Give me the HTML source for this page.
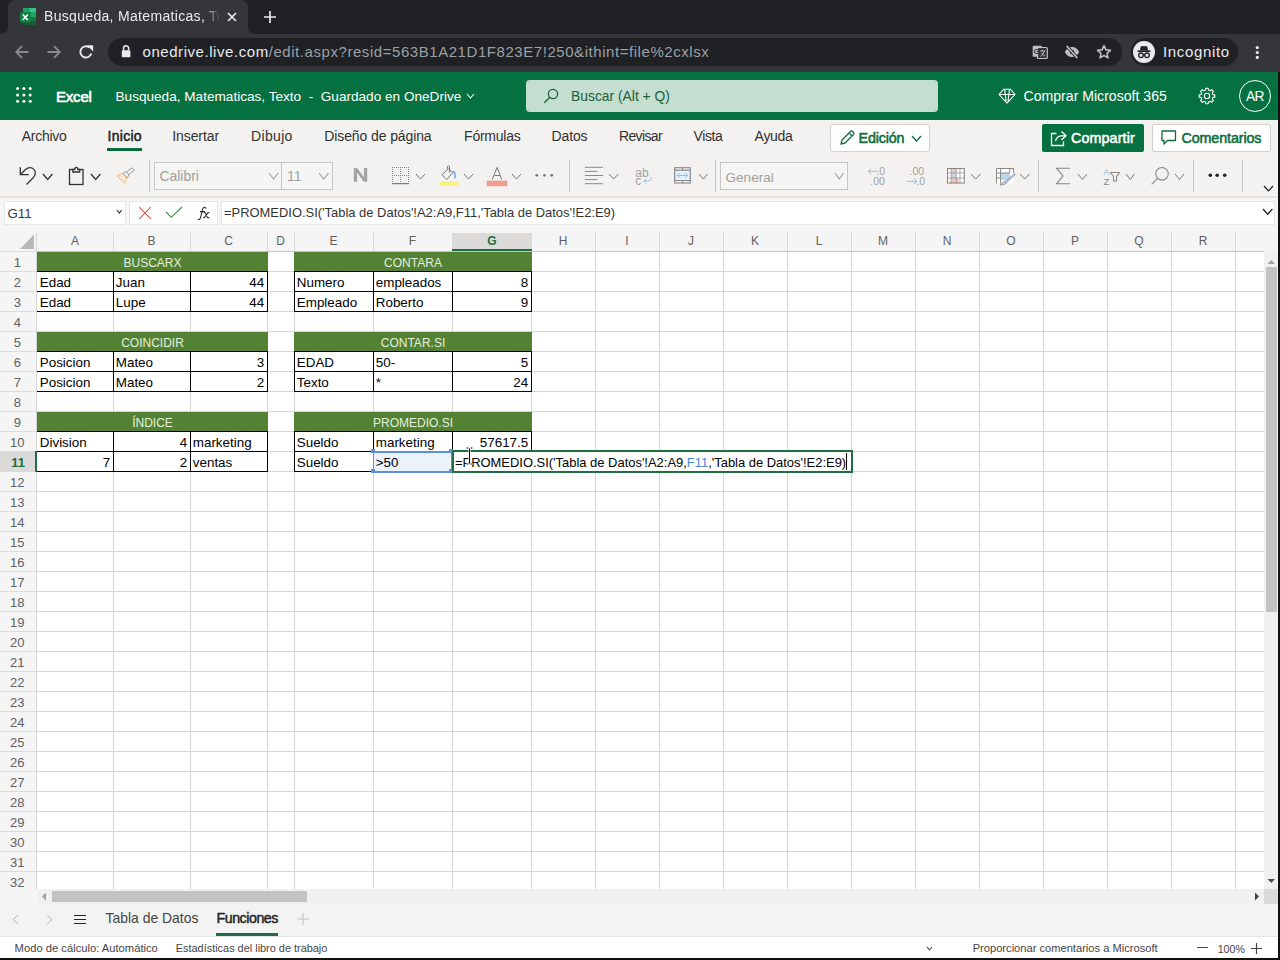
<!DOCTYPE html><html><head><meta charset="utf-8"><style>
*{box-sizing:border-box}
html,body{margin:0;padding:0;width:1280px;height:960px;overflow:hidden;font-family:"Liberation Sans", sans-serif;background:#fff}
.a{position:absolute}
.t{position:absolute;white-space:nowrap}
</style></head><body>
<div class="a" style="left:0px;top:0px;width:1280px;height:34px;background:#202124;"></div>
<svg class="a" style="left:0;top:0" width="260" height="34"><path d="M0 34Q8 34 8 26V8Q8 0 16 0H240Q248 0 248 8V26Q248 34 256 34Z" fill="#35363a"/></svg>
<svg class="a" style="left:20px;top:8px" width="16" height="18" viewBox="0 0 16 18"><rect x="3" y="0" width="13" height="17" fill="#185c37"/><rect x="3" y="0" width="13" height="4.5" fill="#21a366"/><rect x="9.5" y="0" width="6.5" height="4.5" fill="#33c481"/><rect x="9.5" y="4.5" width="6.5" height="4.5" fill="#21a366"/><rect x="9.5" y="9" width="6.5" height="4" fill="#107c41"/><rect x="3" y="4.5" width="6.5" height="8.5" fill="#107c41"/><rect x="0" y="4" width="10.5" height="10.5" fill="#107c41"/><path d="M2.8 6.5L7.8 12M7.8 6.5L2.8 12" stroke="#fff" stroke-width="1.6"/></svg>
<div class="t" style="left:44px;top:9px;font-size:14px;line-height:14px;letter-spacing:0.32px;color:#e8eaed;width:176px;overflow:hidden;-webkit-mask-image:linear-gradient(90deg,#000 160px,rgba(0,0,0,0.25) 172px,transparent 176px)">Busqueda, Matematicas, Texto</div>
<svg class="a" style="left:226px;top:11px" width="12" height="12" viewBox="0 0 12 12"><path d="M2 2L10 10M10 2L2 10" stroke="#e8eaed" stroke-width="1.7"/></svg>
<svg class="a" style="left:263px;top:10px" width="14" height="14" viewBox="0 0 14 14"><path d="M7 1V13M1 7H13" stroke="#e8eaed" stroke-width="1.7"/></svg>
<div class="a" style="left:0px;top:34px;width:1280px;height:38px;background:#35363a;"></div>
<svg class="a" style="left:14px;top:44px" width="16" height="16" viewBox="0 0 16 16"><path d="M14.5 8H2.5M8 2.2L2.2 8L8 13.8" stroke="#8a8b8d" stroke-width="1.8" fill="none"/></svg>
<svg class="a" style="left:46px;top:44px" width="16" height="16" viewBox="0 0 16 16"><path d="M1.5 8H13.5M8 2.2L13.8 8L8 13.8" stroke="#8a8b8d" stroke-width="1.8" fill="none"/></svg>
<svg class="a" style="left:78px;top:44px" width="16" height="16" viewBox="0 0 16 16"><path d="M13.3 9.5A5.6 5.6 0 1 1 11.5 3.6" stroke="#e8eaed" stroke-width="1.9" fill="none"/><path d="M9 1.3H15.2V7.5Z" fill="#e8eaed"/></svg>
<div class="a" style="left:108px;top:38px;width:1014px;height:28px;background:#202124;border-radius:14px"></div>
<svg class="a" style="left:120px;top:44px" width="14" height="16" viewBox="0 0 14 16"><rect x="1.8" y="6.3" width="8.6" height="7" rx="0.8" fill="#e8eaed"/><path d="M3.6 6.3V4.3A2.5 2.5 0 0 1 8.6 4.3V6.3" stroke="#e8eaed" stroke-width="1.6" fill="none"/></svg>
<div class="t" style="left:142.5px;top:44.30px;font-size:15px;line-height:15px;color:#e8eaed;font-weight:normal;letter-spacing:0.557px;">onedrive.live.com<span style="color:#9aa0a6">/edit.aspx?resid=563B1A21D1F823E7!250&amp;ithint=file%2cxlsx</span></div>
<svg class="a" style="left:1032px;top:45px" width="16" height="14" viewBox="0 0 16 14"><rect x="0.7" y="0.7" width="9" height="11" rx="1" fill="#bdc1c6"/><rect x="5.5" y="2.5" width="9.8" height="11" rx="1" fill="#35363a" stroke="#bdc1c6" stroke-width="1.2"/><text x="1.5" y="9" font-size="8" font-weight="bold" fill="#35363a" font-family="Liberation Sans">G</text><path d="M8 6H13M10.5 5V6M12.5 6Q11 10 8.5 11.5M9.5 8Q11 10.5 13 11" stroke="#bdc1c6" stroke-width="0.9" fill="none"/></svg>
<svg class="a" style="left:1064px;top:45px" width="16" height="14" viewBox="0 0 16 14"><path d="M0.8 7C3 3 5.5 2 8 2C10.5 2 13 3 15.2 7C13 11 10.5 12 8 12C5.5 12 3 11 0.8 7Z" fill="#bdc1c6"/><circle cx="8" cy="7" r="2.3" fill="#202124"/><path d="M2.5 0.8L13.5 13.2" stroke="#202124" stroke-width="3.2"/><path d="M2.5 0.8L13.5 13.2" stroke="#bdc1c6" stroke-width="1.6"/></svg>
<svg class="a" style="left:1096px;top:44px" width="16" height="16" viewBox="0 0 16 16"><path d="M8 1.6L9.9 5.9L14.5 6.3L11 9.4L12.1 13.9L8 11.5L3.9 13.9L5 9.4L1.5 6.3L6.1 5.9Z" fill="none" stroke="#bdc1c6" stroke-width="1.6" stroke-linejoin="round"/></svg>
<div class="a" style="left:1131px;top:38px;width:107px;height:28px;background:#202124;border-radius:14px"></div>
<div class="a" style="left:1133px;top:41px;width:22px;height:22px;background:#e8eaed;border-radius:11px"></div>
<svg class="a" style="left:1133px;top:41px" width="22" height="22" viewBox="0 0 22 22"><path d="M4.5 10.2H17.5" stroke="#202124" stroke-width="1.6"/><path d="M6.8 9.6L7.9 5.2H14.1L15.2 9.6Z" fill="#202124"/><circle cx="8" cy="14.3" r="2.3" fill="none" stroke="#202124" stroke-width="1.4"/><circle cx="14" cy="14.3" r="2.3" fill="none" stroke="#202124" stroke-width="1.4"/><path d="M10.2 14H11.8" stroke="#202124" stroke-width="1.2"/></svg>
<div class="t" style="left:1163px;top:44.30px;font-size:15px;line-height:15px;color:#e8eaed;font-weight:normal;letter-spacing:0.658px;">Incognito</div>
<svg class="a" style="left:1254px;top:44px" width="7" height="16" viewBox="0 0 7 16"><circle cx="3.3" cy="3.6" r="1.6" fill="#e8eaed"/><circle cx="3.3" cy="8.5" r="1.6" fill="#e8eaed"/><circle cx="3.3" cy="13.4" r="1.6" fill="#e8eaed"/></svg>
<div class="a" style="left:0px;top:72px;width:1280px;height:48px;background:#067140;"></div>
<svg class="a" style="left:16px;top:87px" width="16" height="16" viewBox="0 0 16 16"><circle cx="1.6" cy="1.6" r="1.5" fill="#fff"/><circle cx="1.6" cy="7.9" r="1.5" fill="#fff"/><circle cx="1.6" cy="14.2" r="1.5" fill="#fff"/><circle cx="7.9" cy="1.6" r="1.5" fill="#fff"/><circle cx="7.9" cy="7.9" r="1.5" fill="#fff"/><circle cx="7.9" cy="14.2" r="1.5" fill="#fff"/><circle cx="14.2" cy="1.6" r="1.5" fill="#fff"/><circle cx="14.2" cy="7.9" r="1.5" fill="#fff"/><circle cx="14.2" cy="14.2" r="1.5" fill="#fff"/></svg>
<div class="t" style="left:56px;top:89.10px;font-size:15px;line-height:15px;color:#fff;font-weight:normal;letter-spacing:-0.2px;-webkit-text-stroke:0.6px #fff;">Excel</div>
<div class="t" style="left:115.5px;top:89.89px;font-size:13.6px;line-height:13.6px;color:#fff;font-weight:normal;">Busqueda, Matematicas, Texto&nbsp; -&nbsp; Guardado en OneDrive</div>
<svg class="a" style="left:466px;top:93px" width="10" height="7" viewBox="0 0 10 7"><path d="M1 1L4.5 5L8 1" fill="none" stroke="#fff" stroke-width="1.1"/></svg>
<div class="a" style="left:526px;top:80px;width:412px;height:32px;background:#c4decf;border-radius:4px"></div>
<svg class="a" style="left:543px;top:88px" width="17" height="16" viewBox="0 0 17 16"><circle cx="10" cy="6" r="4.6" fill="none" stroke="#1b5e3b" stroke-width="1.3"/><path d="M6.8 9.3L1.3 14.8" stroke="#1b5e3b" stroke-width="1.3"/></svg>
<div class="t" style="left:571px;top:90.07px;font-size:13.86px;line-height:13.86px;color:#1b5e3b;font-weight:normal;">Buscar (Alt + Q)</div>
<svg class="a" style="left:998px;top:88px" width="18" height="17" viewBox="0 0 18 17"><path d="M5.8 1.2H12.3L17 6.5L9 15.2L1 6.5Z M1 6.5H17 M6.6 1.4L8.1 13.3 M11.5 1.4L10 13.3" fill="none" stroke="#fff" stroke-width="1.1" stroke-linejoin="round"/></svg>
<div class="t" style="left:1023.5px;top:89.16px;font-size:14.1px;line-height:14.1px;color:#fff;font-weight:normal;">Comprar Microsoft 365</div>
<svg class="a" style="left:1198px;top:87px" width="18" height="18" viewBox="0 0 18 18"><circle cx="9" cy="9" r="2.7" fill="none" stroke="#fff" stroke-width="1.1"/><path d="M16.80 7.76L16.80 10.24L14.93 10.42L14.20 12.19L15.39 13.64L13.64 15.39L12.19 14.20L10.42 14.93L10.24 16.80L7.76 16.80L7.58 14.93L5.81 14.20L4.36 15.39L2.61 13.64L3.80 12.19L3.07 10.42L1.20 10.24L1.20 7.76L3.07 7.58L3.80 5.81L2.61 4.36L4.36 2.61L5.81 3.80L7.58 3.07L7.76 1.20L10.24 1.20L10.42 3.07L12.19 3.80L13.64 2.61L15.39 4.36L14.20 5.81L14.93 7.58Z" fill="none" stroke="#fff" stroke-width="1.1" stroke-linejoin="round"/></svg>
<div class="a" style="left:1239px;top:80px;width:32px;height:32px;border:1.2px solid #fff;border-radius:16px"></div>
<div class="t" style="left:1239px;width:32px;text-align:center;top:90.32px;font-size:13.8px;line-height:13.8px;color:#fff;font-weight:normal;letter-spacing:-0.6px;">AR</div>
<div class="a" style="left:0px;top:120px;width:1280px;height:76px;background:#f3f2f1;"></div>
<div class="t" style="left:21.7px;top:129.45px;font-size:14px;line-height:14px;color:#323130;font-weight:normal;letter-spacing:-0.25px;">Archivo</div>
<div class="t" style="left:107.5px;top:129.45px;font-size:14px;line-height:14px;color:#201f1e;font-weight:normal;letter-spacing:0.28px;-webkit-text-stroke:0.5px #201f1e;">Inicio</div>
<div class="t" style="left:172.3px;top:129.45px;font-size:14px;line-height:14px;color:#323130;font-weight:normal;letter-spacing:-0.1px;">Insertar</div>
<div class="t" style="left:251.0px;top:129.45px;font-size:14px;line-height:14px;color:#323130;font-weight:normal;letter-spacing:0.34px;">Dibujo</div>
<div class="t" style="left:324.29999999999995px;top:129.45px;font-size:14px;line-height:14px;color:#323130;font-weight:normal;letter-spacing:-0.11px;">Diseño de página</div>
<div class="t" style="left:464.09999999999997px;top:129.45px;font-size:14px;line-height:14px;color:#323130;font-weight:normal;letter-spacing:-0.25px;">Fórmulas</div>
<div class="t" style="left:551.6px;top:129.45px;font-size:14px;line-height:14px;color:#323130;font-weight:normal;letter-spacing:-0.14px;">Datos</div>
<div class="t" style="left:619.0px;top:129.45px;font-size:14px;line-height:14px;color:#323130;font-weight:normal;letter-spacing:-0.65px;">Revisar</div>
<div class="t" style="left:693.4px;top:129.45px;font-size:14px;line-height:14px;color:#323130;font-weight:normal;letter-spacing:-0.35px;">Vista</div>
<div class="t" style="left:754.6px;top:129.45px;font-size:14px;line-height:14px;color:#323130;font-weight:normal;letter-spacing:-0.29px;">Ayuda</div>
<div class="a" style="left:107px;top:148px;width:35px;height:3px;background:#0b6a3a;"></div>
<div class="a" style="left:830px;top:124px;width:100px;height:28px;background:#fff;border:1px solid #d2d0ce;border-radius:2px"></div>
<svg class="a" style="left:839px;top:129px" width="17" height="17" viewBox="0 0 17 17"><path d="M2 15L3 11L11.5 2.5Q12.5 1.5 13.5 2.5L14.5 3.5Q15.5 4.5 14.5 5.5L6 14Z M10 4L13 7" fill="none" stroke="#0e6e3a" stroke-width="1.3" stroke-linejoin="round"/></svg>
<div class="t" style="left:858.5px;top:131.10px;font-size:14.3px;line-height:14.3px;color:#0e6e3a;font-weight:normal;letter-spacing:-0.16px;-webkit-text-stroke:0.55px #0e6e3a;">Edición</div>
<svg class="a" style="left:911px;top:135px" width="12" height="8" viewBox="0 0 12 8"><path d="M1 1L5.5 6L10 1" fill="none" stroke="#0e6e3a" stroke-width="1.3"/></svg>
<div class="a" style="left:1042px;top:124px;width:102px;height:28px;background:#067140;border-radius:2px"></div>
<svg class="a" style="left:1050px;top:130px" width="18" height="18" viewBox="0 0 18 18"><path d="M11.5 1.5L16 5.8L11.5 10 M16 5.8H12Q6.5 5.8 5.5 11" fill="none" stroke="#fff" stroke-width="1.3" stroke-linejoin="round"/><path d="M6.5 3.5H1.5V15.5H13.5V11.5" fill="none" stroke="#fff" stroke-width="1.3"/></svg>
<div class="t" style="left:1071px;top:130.80px;font-size:14.3px;line-height:14.3px;color:#fff;font-weight:normal;letter-spacing:0.12px;-webkit-text-stroke:0.55px #fff;">Compartir</div>
<div class="a" style="left:1152px;top:124px;width:119px;height:28px;background:#fff;border:1px solid #d2d0ce;border-radius:2px"></div>
<svg class="a" style="left:1161px;top:130px" width="16" height="17" viewBox="0 0 16 17"><path d="M1 1H14.5V10.5H6.5L3 14V10.5H1Z" fill="none" stroke="#0e6e3a" stroke-width="1.3" stroke-linejoin="round"/></svg>
<div class="t" style="left:1181.5px;top:130.80px;font-size:14.3px;line-height:14.3px;color:#0e6e3a;font-weight:normal;letter-spacing:-0.11px;-webkit-text-stroke:0.55px #0e6e3a;">Comentarios</div>
<svg class="a" style="left:17px;top:165px" width="22" height="22" viewBox="0 0 22 22"><path d="M3.3 2.3V9.7H11.7" fill="none" stroke="#323130" stroke-width="1.3"/><path d="M3.8 9.2L8.5 4.5Q11.5 1.8 15 3Q18.5 4.8 18.3 8.5Q18 11 15.5 13.5L9.5 19.5" fill="none" stroke="#323130" stroke-width="1.3"/></svg>
<svg class="a" style="left:41.8px;top:172.8px" width="12" height="8" viewBox="0 0 12 8"><path d="M1 1L5.7 6.5L10.4 1" fill="none" stroke="#323130" stroke-width="1.3"/></svg>
<svg class="a" style="left:68px;top:166px" width="17" height="20" viewBox="0 0 17 20"><rect x="1.5" y="3.5" width="13.5" height="15" fill="none" stroke="#323130" stroke-width="1.3"/><path d="M4.8 6H11.8V3.5H9.8Q9.8 1.3 8.3 1.3Q6.8 1.3 6.8 3.5H4.8Z" fill="#f3f2f1" stroke="#323130" stroke-width="1.3" stroke-linejoin="round"/></svg>
<svg class="a" style="left:89.8px;top:172.8px" width="12" height="8" viewBox="0 0 12 8"><path d="M1 1L5.7 6.5L10.4 1" fill="none" stroke="#323130" stroke-width="1.3"/></svg>
<svg class="a" style="left:116px;top:167px" width="19" height="17" viewBox="0 0 19 17"><path d="M0.8 8.8L7 6.5L11 11L8.5 16Z" fill="#fde7cf" stroke="#f2b97f" stroke-width="1" stroke-linejoin="round"/><path d="M7 6.5L10 4.5L13 8L11 11Z" fill="#f3f2f1" stroke="#9a9896" stroke-width="1" stroke-linejoin="round"/><path d="M10.5 5L16 0.8L18.3 3.2L12.5 7.8" fill="none" stroke="#9a9896" stroke-width="1"/></svg>
<div class="a" style="left:149px;top:160px;width:1px;height:32px;background:#c8c6c4;"></div>
<div class="a" style="left:154px;top:162px;width:128px;height:28px;background:#f5f5f4;border:1px solid #c8c6c4"></div>
<div class="a" style="left:281px;top:162px;width:52px;height:28px;background:#f5f5f4;border:1px solid #c8c6c4"></div>
<div class="t" style="left:159.5px;top:170.23px;font-size:13.9px;line-height:13.9px;color:#a19f9d;font-weight:normal;">Calibri</div>
<svg class="a" style="left:267.8px;top:172.2px" width="12" height="9" viewBox="0 0 12 9"><path d="M1 1L5.6 7L10.2 1" fill="none" stroke="#a19f9d" stroke-width="1.1"/></svg>
<div class="t" style="left:287px;top:170.23px;font-size:13.9px;line-height:13.9px;color:#a19f9d;font-weight:normal;">11</div>
<svg class="a" style="left:318.4px;top:172.2px" width="12" height="9" viewBox="0 0 12 9"><path d="M1 1L5.8 7L10.6 1" fill="none" stroke="#a19f9d" stroke-width="1.1"/></svg>
<svg class="a" style="left:353px;top:168px" width="15" height="15" viewBox="0 0 15 15"><path d="M0.8 0H4.2L10.9 9.3V0H14.2V13.7H10.8L4.1 4.4V13.7H0.8Z" fill="#a5a3a1"/></svg>
<svg class="a" style="left:392px;top:167px" width="18" height="19" viewBox="0 0 18 19"><rect x="0" y="0" width="1" height="1" fill="#8a8886"/><rect x="0" y="8" width="1" height="1" fill="#8a8886"/><rect x="2" y="0" width="1" height="1" fill="#8a8886"/><rect x="2" y="8" width="1" height="1" fill="#8a8886"/><rect x="4" y="0" width="1" height="1" fill="#8a8886"/><rect x="4" y="8" width="1" height="1" fill="#8a8886"/><rect x="6" y="0" width="1" height="1" fill="#8a8886"/><rect x="6" y="8" width="1" height="1" fill="#8a8886"/><rect x="8" y="0" width="1" height="1" fill="#8a8886"/><rect x="8" y="8" width="1" height="1" fill="#8a8886"/><rect x="10" y="0" width="1" height="1" fill="#8a8886"/><rect x="10" y="8" width="1" height="1" fill="#8a8886"/><rect x="12" y="0" width="1" height="1" fill="#8a8886"/><rect x="12" y="8" width="1" height="1" fill="#8a8886"/><rect x="14" y="0" width="1" height="1" fill="#8a8886"/><rect x="14" y="8" width="1" height="1" fill="#8a8886"/><rect x="16" y="0" width="1" height="1" fill="#8a8886"/><rect x="16" y="8" width="1" height="1" fill="#8a8886"/><rect x="0" y="2" width="1" height="1" fill="#8a8886"/><rect x="0" y="4" width="1" height="1" fill="#8a8886"/><rect x="0" y="6" width="1" height="1" fill="#8a8886"/><rect x="0" y="8" width="1" height="1" fill="#8a8886"/><rect x="0" y="10" width="1" height="1" fill="#8a8886"/><rect x="0" y="12" width="1" height="1" fill="#8a8886"/><rect x="0" y="14" width="1" height="1" fill="#8a8886"/><rect x="8" y="2" width="1" height="1" fill="#8a8886"/><rect x="8" y="4" width="1" height="1" fill="#8a8886"/><rect x="8" y="6" width="1" height="1" fill="#8a8886"/><rect x="8" y="8" width="1" height="1" fill="#8a8886"/><rect x="8" y="10" width="1" height="1" fill="#8a8886"/><rect x="8" y="12" width="1" height="1" fill="#8a8886"/><rect x="8" y="14" width="1" height="1" fill="#8a8886"/><rect x="16" y="2" width="1" height="1" fill="#8a8886"/><rect x="16" y="4" width="1" height="1" fill="#8a8886"/><rect x="16" y="6" width="1" height="1" fill="#8a8886"/><rect x="16" y="8" width="1" height="1" fill="#8a8886"/><rect x="16" y="10" width="1" height="1" fill="#8a8886"/><rect x="16" y="12" width="1" height="1" fill="#8a8886"/><rect x="16" y="14" width="1" height="1" fill="#8a8886"/><rect x="0" y="16" width="17" height="1.2" fill="#7a7876"/></svg>
<svg class="a" style="left:415px;top:173px" width="12" height="8" viewBox="0 0 12 8"><path d="M1 1L5.5 6L10 1" fill="none" stroke="#7a7876" stroke-width="1"/></svg>
<svg class="a" style="left:438px;top:165px" width="22" height="22" viewBox="0 0 22 22"><path d="M3.9 9.8L9.4 4.6V1.8Q9.4 0.9 10.45 0.9Q11.5 0.9 11.5 1.8V7.5M10.3 3.8L14.7 7.8L8.8 14.6L3.9 9.8" fill="none" stroke="#7a7876" stroke-width="1" stroke-linejoin="round"/><path d="M14.3 7.3Q16.8 5.8 17 9.5V13.2" fill="none" stroke="#6aa3d9" stroke-width="1.5"/><rect x="1.2" y="16.8" width="19.3" height="3.6" rx="1" fill="#f7ef7e"/></svg>
<svg class="a" style="left:463px;top:173px" width="12" height="8" viewBox="0 0 12 8"><path d="M1 1L5.6 6L10.2 1" fill="none" stroke="#7a7876" stroke-width="1"/></svg>
<svg class="a" style="left:486px;top:166px" width="22" height="21" viewBox="0 0 22 21"><path d="M6.2 13.6L11.1 1.4L15.8 13.6M8.5 9.5H13.8" fill="none" stroke="#7a7876" stroke-width="1"/><rect x="1" y="15" width="20" height="4.9" fill="#f59c90" stroke="#e2968a" stroke-width="0.6"/></svg>
<svg class="a" style="left:511px;top:173px" width="12" height="8" viewBox="0 0 12 8"><path d="M1 1L5.5 6L10 1" fill="none" stroke="#7a7876" stroke-width="1"/></svg>
<svg class="a" style="left:535px;top:173px" width="19" height="5" viewBox="0 0 19 5"><circle cx="1.8" cy="2.3" r="1.4" fill="#7a7876"/><circle cx="9.5" cy="2.3" r="1.4" fill="#7a7876"/><circle cx="16.7" cy="2.3" r="1.4" fill="#7a7876"/></svg>
<div class="a" style="left:569px;top:160px;width:1px;height:32px;background:#c8c6c4;"></div>
<svg class="a" style="left:584px;top:166px" width="20" height="19" viewBox="0 0 20 19"><rect x="0.8" y="0.8" width="18.3" height="1" fill="#8a8886"/><rect x="0.8" y="4.9" width="12.5" height="1" fill="#8a8886"/><rect x="0.8" y="9" width="18.3" height="1" fill="#8a8886"/><rect x="0.8" y="13.1" width="12.5" height="1" fill="#8a8886"/><rect x="0.8" y="17.2" width="18.3" height="1" fill="#8a8886"/></svg>
<svg class="a" style="left:608px;top:173px" width="12" height="8" viewBox="0 0 12 8"><path d="M1 1L5.65 6L10.3 1" fill="none" stroke="#7a7876" stroke-width="1"/></svg>
<svg class="a" style="left:634px;top:165px" width="20" height="21" viewBox="0 0 20 21"><text x="1.3" y="11.5" font-size="12" fill="#a19f9d" font-family="Liberation Sans">ab</text><text x="1.3" y="19.7" font-size="12" fill="#a19f9d" font-family="Liberation Sans">c</text><path d="M17.5 12Q17.5 16 13 16H10M12 14L9.8 16.2L12 18.4" fill="none" stroke="#8fbde6" stroke-width="1"/></svg>
<svg class="a" style="left:673px;top:166px" width="19" height="19" viewBox="0 0 19 19"><rect x="1.7" y="4.2" width="15.6" height="10.3" fill="#e5f1fb" stroke="#9ec5e6" stroke-width="0.9"/><rect x="1.7" y="1.7" width="15.6" height="15.3" fill="none" stroke="#8a8886" stroke-width="1.1"/><path d="M1.7 4.2H17.3M1.7 14.5H17.3M9.5 1.7V4.2M9.5 14.5V17" stroke="#8a8886" stroke-width="1" fill="none"/><path d="M4.5 9.4H14.5M6.5 7.2L4.3 9.4L6.5 11.6M12.5 7.2L14.7 9.4L12.5 11.6" stroke="#8fbde6" stroke-width="1" fill="none"/></svg>
<svg class="a" style="left:697.5px;top:173px" width="11" height="8" viewBox="0 0 11 8"><path d="M1 1L5.25 6L9.5 1" fill="none" stroke="#7a7876" stroke-width="1"/></svg>
<div class="a" style="left:715px;top:160px;width:1px;height:32px;background:#c8c6c4;"></div>
<div class="a" style="left:720px;top:162px;width:128px;height:28px;background:#f5f5f4;border:1px solid #c8c6c4"></div>
<div class="t" style="left:725.5px;top:170.50px;font-size:13.58px;line-height:13.58px;color:#a19f9d;font-weight:normal;">General</div>
<svg class="a" style="left:834.2px;top:172.2px" width="11" height="9" viewBox="0 0 11 9"><path d="M1 1L5.25 7L9.5 1" fill="none" stroke="#a19f9d" stroke-width="1.1"/></svg>
<svg class="a" style="left:864px;top:164px" width="26" height="24" viewBox="0 0 26 24"><path d="M4.5 7.3H13.8M7.3 4.5L4.3 7.3L7.3 10.1" stroke="#8fbde6" stroke-width="1" fill="none"/><text x="12.3" y="10.8" font-size="10.5" fill="#a19f9d" font-family="Liberation Sans">.0</text><text x="6.3" y="20.9" font-size="10.5" fill="#a19f9d" font-family="Liberation Sans">.00</text></svg>
<svg class="a" style="left:904px;top:164px" width="26" height="24" viewBox="0 0 26 24"><text x="5.6" y="10.8" font-size="10.5" fill="#a19f9d" font-family="Liberation Sans">.00</text><path d="M3 17.3H12.8M10 14.5L13 17.3L10 20.1" stroke="#8fbde6" stroke-width="1" fill="none"/><text x="12.3" y="20.9" font-size="10.5" fill="#a19f9d" font-family="Liberation Sans">.0</text></svg>
<svg class="a" style="left:947.3px;top:168.3px" width="19" height="17" viewBox="0 0 19 17"><rect x="0" y="0" width="17.5" height="15.3" fill="#fff"/><rect x="4.1" y="0" width="5.1" height="4.9" fill="#f9c4c2"/><rect x="4.1" y="4.9" width="5.1" height="5.1" fill="#b9d7f1"/><rect x="4.1" y="10" width="7.6" height="5.3" fill="#f9c4c2"/><path d="M4.1 0V15.3M9.2 0V15.3M13.0 0V15.3M0 4.9H17.5M0 10H17.5" stroke="#a09e9c" stroke-width="0.9"/><rect x="0.5" y="0.5" width="16.8" height="14.5" fill="none" stroke="#8a8886" stroke-width="1.1"/></svg>
<svg class="a" style="left:969.6px;top:173px" width="12" height="8" viewBox="0 0 12 8"><path d="M1 1L5.7 6L10.4 1" fill="none" stroke="#7a7876" stroke-width="1"/></svg>
<svg class="a" style="left:995.8px;top:168px" width="21" height="19" viewBox="0 0 21 19"><rect x="0.5" y="0.5" width="17" height="15" fill="#fff"/><rect x="4.6" y="5" width="9.2" height="7" fill="#b9d7f1"/><path d="M0.5 15.5V0.5H17.5V5M4.6 0.5V15.5M13.8 0.5V5M0.5 5H13.8M0.5 10H4.6" fill="none" stroke="#8a8886" stroke-width="1"/><path d="M18.5 5.5L10 13Q7 13.5 4 17Q8.5 17.5 11 14.5L19.3 6.3Z" fill="#b9d7f1" stroke="#8a8886" stroke-width="0.8" stroke-linejoin="round"/></svg>
<svg class="a" style="left:1018.8px;top:173px" width="12" height="8" viewBox="0 0 12 8"><path d="M1 1L5.7 6L10.4 1" fill="none" stroke="#7a7876" stroke-width="1"/></svg>
<div class="a" style="left:1038px;top:160px;width:1px;height:32px;background:#c8c6c4;"></div>
<svg class="a" style="left:1055px;top:167px" width="16" height="18" viewBox="0 0 16 18"><path d="M15 1.2H1.5L8 9L1.5 16.8H15" fill="none" stroke="#8a8886" stroke-width="1.1"/></svg>
<svg class="a" style="left:1077px;top:172.6px" width="11" height="8" viewBox="0 0 11 8"><path d="M1 1L5.45 6.5L9.9 1" fill="none" stroke="#7a7876" stroke-width="1"/></svg>
<svg class="a" style="left:1103px;top:166px" width="18" height="20" viewBox="0 0 18 20"><text x="0.3" y="8.5" font-size="9.5" fill="#8fbde6" font-family="Liberation Sans">A</text><text x="0.5" y="18.7" font-size="9.5" fill="#8a8886" font-family="Liberation Sans">Z</text><path d="M7.5 6.5H16.5L13.5 10.5V15H10.5V10.5Z" fill="none" stroke="#8a8886" stroke-width="1.1" stroke-linejoin="round"/></svg>
<svg class="a" style="left:1125.3px;top:172.6px" width="11" height="8" viewBox="0 0 11 8"><path d="M1 1L5.2 6.5L9.4 1" fill="none" stroke="#7a7876" stroke-width="1"/></svg>
<svg class="a" style="left:1150px;top:166px" width="20" height="20" viewBox="0 0 20 20"><circle cx="12" cy="7.8" r="6.3" fill="none" stroke="#8a8886" stroke-width="1.1"/><path d="M7.6 12.3L1.6 18.3" stroke="#8a8886" stroke-width="1.1"/></svg>
<svg class="a" style="left:1174px;top:172.6px" width="12" height="8" viewBox="0 0 12 8"><path d="M1 1L5.5 6.5L10 1" fill="none" stroke="#7a7876" stroke-width="1"/></svg>
<div class="a" style="left:1193px;top:160px;width:1px;height:32px;background:#c8c6c4;"></div>
<svg class="a" style="left:1207px;top:172px" width="21" height="6" viewBox="0 0 21 6"><circle cx="3.3" cy="3.3" r="1.8" fill="#252423"/><circle cx="10.2" cy="3.3" r="1.8" fill="#252423"/><circle cx="17.7" cy="3.3" r="1.8" fill="#252423"/></svg>
<div class="a" style="left:1242px;top:160px;width:1px;height:32px;background:#c8c6c4;"></div>
<svg class="a" style="left:1263px;top:185px" width="12" height="7" viewBox="0 0 12 7"><path d="M1 1L5.5 5.9L10 1" fill="none" stroke="#252423" stroke-width="1.3"/></svg>
<div class="a" style="left:0px;top:196px;width:1280px;height:2px;background:#e6e5e4;"></div>
<div class="a" style="left:0px;top:198px;width:1280px;height:35px;background:#f5f5f5;"></div>
<div class="a" style="left:4px;top:201px;width:122px;height:24px;background:#fff;border:1px solid #e6e6e6"></div>
<div class="t" style="left:7.5px;top:206.74px;font-size:13.3px;line-height:13.3px;color:#3b3a39;font-weight:normal;">G11</div>
<svg class="a" style="left:116.2px;top:209px" width="7" height="6" viewBox="0 0 7 6"><path d="M1 1L3.35 4L5.7 1" fill="none" stroke="#333" stroke-width="1.2"/></svg>
<div class="a" style="left:129px;top:201px;width:89px;height:24px;background:#fff;border:1px solid #e6e6e6"></div>
<svg class="a" style="left:138px;top:206px" width="14" height="14" viewBox="0 0 14 14"><path d="M1.2 1.2L12.8 12.8M12.8 1.2L1.2 12.8" stroke="#d9534b" stroke-width="1.05"/></svg>
<svg class="a" style="left:165px;top:206px" width="18" height="13" viewBox="0 0 18 13"><path d="M1 6L6.3 11.3L17 1" fill="none" stroke="#3d8b50" stroke-width="1.1"/></svg>
<svg class="a" style="left:196px;top:206px" width="14" height="15" viewBox="0 0 14 15"><path d="M10 2.2Q9 0.7 7.6 1.6Q6.8 2.2 6.4 4L4.6 11.6Q4 13.8 2.2 13.4M4.3 5.6H8.4" fill="none" stroke="#252423" stroke-width="1.05" stroke-linecap="round"/><path transform="translate(0.6,0)" d="M7.6 6.8Q8.6 6.2 9.2 7.6L10.6 11Q11.2 12.4 12.4 11.6M12.4 6.6Q11.8 6.2 10.9 7.4L8.4 10.8Q7.6 12.2 6.8 11.6" fill="none" stroke="#252423" stroke-width="1.05" stroke-linecap="round"/></svg>
<div class="a" style="left:221px;top:201px;width:1054px;height:24px;background:#fff;border:1px solid #e6e6e6"></div>
<div class="t" style="left:224px;top:207.25px;font-size:12.94px;line-height:12.94px;color:#333;font-weight:normal;">=PROMEDIO.SI('Tabla de Datos'!A2:A9,F11,'Tabla de Datos'!E2:E9)</div>
<svg class="a" style="left:1261.8px;top:207.9px" width="12" height="8" viewBox="0 0 12 8"><path d="M1 1L5.7 6.2L10.4 1" fill="none" stroke="#252423" stroke-width="1.3"/></svg>
<div class="a" style="left:0px;top:233px;width:1264px;height:18px;background:#f5f5f5;"></div>
<div class="a" style="left:0px;top:251px;width:37px;height:638px;background:#f5f5f5;"></div>
<div class="a" style="left:37px;top:251px;width:1227px;height:638px;background:#fff;"></div>
<div class="a" style="left:113px;top:251px;width:1px;height:638px;background:#d6d6d6;"></div>
<div class="a" style="left:113px;top:233px;width:1px;height:18px;background:#d8d8d8;"></div>
<div class="a" style="left:190px;top:251px;width:1px;height:638px;background:#d6d6d6;"></div>
<div class="a" style="left:190px;top:233px;width:1px;height:18px;background:#d8d8d8;"></div>
<div class="a" style="left:267px;top:251px;width:1px;height:638px;background:#d6d6d6;"></div>
<div class="a" style="left:267px;top:233px;width:1px;height:18px;background:#d8d8d8;"></div>
<div class="a" style="left:294px;top:251px;width:1px;height:638px;background:#d6d6d6;"></div>
<div class="a" style="left:294px;top:233px;width:1px;height:18px;background:#d8d8d8;"></div>
<div class="a" style="left:373px;top:251px;width:1px;height:638px;background:#d6d6d6;"></div>
<div class="a" style="left:373px;top:233px;width:1px;height:18px;background:#d8d8d8;"></div>
<div class="a" style="left:452px;top:251px;width:1px;height:638px;background:#d6d6d6;"></div>
<div class="a" style="left:452px;top:233px;width:1px;height:18px;background:#d8d8d8;"></div>
<div class="a" style="left:531px;top:251px;width:1px;height:638px;background:#d6d6d6;"></div>
<div class="a" style="left:531px;top:233px;width:1px;height:18px;background:#d8d8d8;"></div>
<div class="a" style="left:595px;top:251px;width:1px;height:638px;background:#d6d6d6;"></div>
<div class="a" style="left:595px;top:233px;width:1px;height:18px;background:#d8d8d8;"></div>
<div class="a" style="left:659px;top:251px;width:1px;height:638px;background:#d6d6d6;"></div>
<div class="a" style="left:659px;top:233px;width:1px;height:18px;background:#d8d8d8;"></div>
<div class="a" style="left:723px;top:251px;width:1px;height:638px;background:#d6d6d6;"></div>
<div class="a" style="left:723px;top:233px;width:1px;height:18px;background:#d8d8d8;"></div>
<div class="a" style="left:787px;top:251px;width:1px;height:638px;background:#d6d6d6;"></div>
<div class="a" style="left:787px;top:233px;width:1px;height:18px;background:#d8d8d8;"></div>
<div class="a" style="left:851px;top:251px;width:1px;height:638px;background:#d6d6d6;"></div>
<div class="a" style="left:851px;top:233px;width:1px;height:18px;background:#d8d8d8;"></div>
<div class="a" style="left:915px;top:251px;width:1px;height:638px;background:#d6d6d6;"></div>
<div class="a" style="left:915px;top:233px;width:1px;height:18px;background:#d8d8d8;"></div>
<div class="a" style="left:979px;top:251px;width:1px;height:638px;background:#d6d6d6;"></div>
<div class="a" style="left:979px;top:233px;width:1px;height:18px;background:#d8d8d8;"></div>
<div class="a" style="left:1043px;top:251px;width:1px;height:638px;background:#d6d6d6;"></div>
<div class="a" style="left:1043px;top:233px;width:1px;height:18px;background:#d8d8d8;"></div>
<div class="a" style="left:1107px;top:251px;width:1px;height:638px;background:#d6d6d6;"></div>
<div class="a" style="left:1107px;top:233px;width:1px;height:18px;background:#d8d8d8;"></div>
<div class="a" style="left:1171px;top:251px;width:1px;height:638px;background:#d6d6d6;"></div>
<div class="a" style="left:1171px;top:233px;width:1px;height:18px;background:#d8d8d8;"></div>
<div class="a" style="left:1235px;top:251px;width:1px;height:638px;background:#d6d6d6;"></div>
<div class="a" style="left:1235px;top:233px;width:1px;height:18px;background:#d8d8d8;"></div>
<div class="a" style="left:37px;top:271px;width:1227px;height:1px;background:#d6d6d6;"></div>
<div class="a" style="left:0px;top:271px;width:36px;height:1px;background:#dcdcdc;"></div>
<div class="a" style="left:37px;top:291px;width:1227px;height:1px;background:#d6d6d6;"></div>
<div class="a" style="left:0px;top:291px;width:36px;height:1px;background:#dcdcdc;"></div>
<div class="a" style="left:37px;top:311px;width:1227px;height:1px;background:#d6d6d6;"></div>
<div class="a" style="left:0px;top:311px;width:36px;height:1px;background:#dcdcdc;"></div>
<div class="a" style="left:37px;top:331px;width:1227px;height:1px;background:#d6d6d6;"></div>
<div class="a" style="left:0px;top:331px;width:36px;height:1px;background:#dcdcdc;"></div>
<div class="a" style="left:37px;top:351px;width:1227px;height:1px;background:#d6d6d6;"></div>
<div class="a" style="left:0px;top:351px;width:36px;height:1px;background:#dcdcdc;"></div>
<div class="a" style="left:37px;top:371px;width:1227px;height:1px;background:#d6d6d6;"></div>
<div class="a" style="left:0px;top:371px;width:36px;height:1px;background:#dcdcdc;"></div>
<div class="a" style="left:37px;top:391px;width:1227px;height:1px;background:#d6d6d6;"></div>
<div class="a" style="left:0px;top:391px;width:36px;height:1px;background:#dcdcdc;"></div>
<div class="a" style="left:37px;top:411px;width:1227px;height:1px;background:#d6d6d6;"></div>
<div class="a" style="left:0px;top:411px;width:36px;height:1px;background:#dcdcdc;"></div>
<div class="a" style="left:37px;top:431px;width:1227px;height:1px;background:#d6d6d6;"></div>
<div class="a" style="left:0px;top:431px;width:36px;height:1px;background:#dcdcdc;"></div>
<div class="a" style="left:37px;top:451px;width:1227px;height:1px;background:#d6d6d6;"></div>
<div class="a" style="left:0px;top:451px;width:36px;height:1px;background:#dcdcdc;"></div>
<div class="a" style="left:37px;top:471px;width:1227px;height:1px;background:#d6d6d6;"></div>
<div class="a" style="left:0px;top:471px;width:36px;height:1px;background:#dcdcdc;"></div>
<div class="a" style="left:37px;top:491px;width:1227px;height:1px;background:#d6d6d6;"></div>
<div class="a" style="left:0px;top:491px;width:36px;height:1px;background:#dcdcdc;"></div>
<div class="a" style="left:37px;top:511px;width:1227px;height:1px;background:#d6d6d6;"></div>
<div class="a" style="left:0px;top:511px;width:36px;height:1px;background:#dcdcdc;"></div>
<div class="a" style="left:37px;top:531px;width:1227px;height:1px;background:#d6d6d6;"></div>
<div class="a" style="left:0px;top:531px;width:36px;height:1px;background:#dcdcdc;"></div>
<div class="a" style="left:37px;top:551px;width:1227px;height:1px;background:#d6d6d6;"></div>
<div class="a" style="left:0px;top:551px;width:36px;height:1px;background:#dcdcdc;"></div>
<div class="a" style="left:37px;top:571px;width:1227px;height:1px;background:#d6d6d6;"></div>
<div class="a" style="left:0px;top:571px;width:36px;height:1px;background:#dcdcdc;"></div>
<div class="a" style="left:37px;top:591px;width:1227px;height:1px;background:#d6d6d6;"></div>
<div class="a" style="left:0px;top:591px;width:36px;height:1px;background:#dcdcdc;"></div>
<div class="a" style="left:37px;top:611px;width:1227px;height:1px;background:#d6d6d6;"></div>
<div class="a" style="left:0px;top:611px;width:36px;height:1px;background:#dcdcdc;"></div>
<div class="a" style="left:37px;top:631px;width:1227px;height:1px;background:#d6d6d6;"></div>
<div class="a" style="left:0px;top:631px;width:36px;height:1px;background:#dcdcdc;"></div>
<div class="a" style="left:37px;top:651px;width:1227px;height:1px;background:#d6d6d6;"></div>
<div class="a" style="left:0px;top:651px;width:36px;height:1px;background:#dcdcdc;"></div>
<div class="a" style="left:37px;top:671px;width:1227px;height:1px;background:#d6d6d6;"></div>
<div class="a" style="left:0px;top:671px;width:36px;height:1px;background:#dcdcdc;"></div>
<div class="a" style="left:37px;top:691px;width:1227px;height:1px;background:#d6d6d6;"></div>
<div class="a" style="left:0px;top:691px;width:36px;height:1px;background:#dcdcdc;"></div>
<div class="a" style="left:37px;top:711px;width:1227px;height:1px;background:#d6d6d6;"></div>
<div class="a" style="left:0px;top:711px;width:36px;height:1px;background:#dcdcdc;"></div>
<div class="a" style="left:37px;top:731px;width:1227px;height:1px;background:#d6d6d6;"></div>
<div class="a" style="left:0px;top:731px;width:36px;height:1px;background:#dcdcdc;"></div>
<div class="a" style="left:37px;top:751px;width:1227px;height:1px;background:#d6d6d6;"></div>
<div class="a" style="left:0px;top:751px;width:36px;height:1px;background:#dcdcdc;"></div>
<div class="a" style="left:37px;top:771px;width:1227px;height:1px;background:#d6d6d6;"></div>
<div class="a" style="left:0px;top:771px;width:36px;height:1px;background:#dcdcdc;"></div>
<div class="a" style="left:37px;top:791px;width:1227px;height:1px;background:#d6d6d6;"></div>
<div class="a" style="left:0px;top:791px;width:36px;height:1px;background:#dcdcdc;"></div>
<div class="a" style="left:37px;top:811px;width:1227px;height:1px;background:#d6d6d6;"></div>
<div class="a" style="left:0px;top:811px;width:36px;height:1px;background:#dcdcdc;"></div>
<div class="a" style="left:37px;top:831px;width:1227px;height:1px;background:#d6d6d6;"></div>
<div class="a" style="left:0px;top:831px;width:36px;height:1px;background:#dcdcdc;"></div>
<div class="a" style="left:37px;top:851px;width:1227px;height:1px;background:#d6d6d6;"></div>
<div class="a" style="left:0px;top:851px;width:36px;height:1px;background:#dcdcdc;"></div>
<div class="a" style="left:37px;top:871px;width:1227px;height:1px;background:#d6d6d6;"></div>
<div class="a" style="left:0px;top:871px;width:36px;height:1px;background:#dcdcdc;"></div>
<div class="t" style="left:37px;width:76px;text-align:center;top:234.64px;font-size:12px;line-height:12px;color:#616161;font-weight:normal;">A</div>
<div class="t" style="left:113px;width:77px;text-align:center;top:234.64px;font-size:12px;line-height:12px;color:#616161;font-weight:normal;">B</div>
<div class="t" style="left:190px;width:77px;text-align:center;top:234.64px;font-size:12px;line-height:12px;color:#616161;font-weight:normal;">C</div>
<div class="t" style="left:267px;width:27px;text-align:center;top:234.64px;font-size:12px;line-height:12px;color:#616161;font-weight:normal;">D</div>
<div class="t" style="left:294px;width:79px;text-align:center;top:234.64px;font-size:12px;line-height:12px;color:#616161;font-weight:normal;">E</div>
<div class="t" style="left:373px;width:79px;text-align:center;top:234.64px;font-size:12px;line-height:12px;color:#616161;font-weight:normal;">F</div>
<div class="t" style="left:452px;width:79px;text-align:center;top:234.64px;font-size:12px;line-height:12px;color:#616161;font-weight:normal;">G</div>
<div class="t" style="left:531px;width:64px;text-align:center;top:234.64px;font-size:12px;line-height:12px;color:#616161;font-weight:normal;">H</div>
<div class="t" style="left:595px;width:64px;text-align:center;top:234.64px;font-size:12px;line-height:12px;color:#616161;font-weight:normal;">I</div>
<div class="t" style="left:659px;width:64px;text-align:center;top:234.64px;font-size:12px;line-height:12px;color:#616161;font-weight:normal;">J</div>
<div class="t" style="left:723px;width:64px;text-align:center;top:234.64px;font-size:12px;line-height:12px;color:#616161;font-weight:normal;">K</div>
<div class="t" style="left:787px;width:64px;text-align:center;top:234.64px;font-size:12px;line-height:12px;color:#616161;font-weight:normal;">L</div>
<div class="t" style="left:851px;width:64px;text-align:center;top:234.64px;font-size:12px;line-height:12px;color:#616161;font-weight:normal;">M</div>
<div class="t" style="left:915px;width:64px;text-align:center;top:234.64px;font-size:12px;line-height:12px;color:#616161;font-weight:normal;">N</div>
<div class="t" style="left:979px;width:64px;text-align:center;top:234.64px;font-size:12px;line-height:12px;color:#616161;font-weight:normal;">O</div>
<div class="t" style="left:1043px;width:64px;text-align:center;top:234.64px;font-size:12px;line-height:12px;color:#616161;font-weight:normal;">P</div>
<div class="t" style="left:1107px;width:64px;text-align:center;top:234.64px;font-size:12px;line-height:12px;color:#616161;font-weight:normal;">Q</div>
<div class="t" style="left:1171px;width:64px;text-align:center;top:234.64px;font-size:12px;line-height:12px;color:#616161;font-weight:normal;">R</div>
<div class="t" style="left:0px;width:34.6px;text-align:center;top:255.60px;font-size:13px;line-height:13px;color:#616161;font-weight:normal;">1</div>
<div class="t" style="left:0px;width:34.6px;text-align:center;top:275.60px;font-size:13px;line-height:13px;color:#616161;font-weight:normal;">2</div>
<div class="t" style="left:0px;width:34.6px;text-align:center;top:295.60px;font-size:13px;line-height:13px;color:#616161;font-weight:normal;">3</div>
<div class="t" style="left:0px;width:34.6px;text-align:center;top:315.60px;font-size:13px;line-height:13px;color:#616161;font-weight:normal;">4</div>
<div class="t" style="left:0px;width:34.6px;text-align:center;top:335.60px;font-size:13px;line-height:13px;color:#616161;font-weight:normal;">5</div>
<div class="t" style="left:0px;width:34.6px;text-align:center;top:355.60px;font-size:13px;line-height:13px;color:#616161;font-weight:normal;">6</div>
<div class="t" style="left:0px;width:34.6px;text-align:center;top:375.60px;font-size:13px;line-height:13px;color:#616161;font-weight:normal;">7</div>
<div class="t" style="left:0px;width:34.6px;text-align:center;top:395.60px;font-size:13px;line-height:13px;color:#616161;font-weight:normal;">8</div>
<div class="t" style="left:0px;width:34.6px;text-align:center;top:415.60px;font-size:13px;line-height:13px;color:#616161;font-weight:normal;">9</div>
<div class="t" style="left:0px;width:34.6px;text-align:center;top:435.60px;font-size:13px;line-height:13px;color:#616161;font-weight:normal;">10</div>
<div class="t" style="left:0px;width:34.6px;text-align:center;top:455.60px;font-size:13px;line-height:13px;color:#616161;font-weight:normal;">11</div>
<div class="t" style="left:0px;width:34.6px;text-align:center;top:475.60px;font-size:13px;line-height:13px;color:#616161;font-weight:normal;">12</div>
<div class="t" style="left:0px;width:34.6px;text-align:center;top:495.60px;font-size:13px;line-height:13px;color:#616161;font-weight:normal;">13</div>
<div class="t" style="left:0px;width:34.6px;text-align:center;top:515.60px;font-size:13px;line-height:13px;color:#616161;font-weight:normal;">14</div>
<div class="t" style="left:0px;width:34.6px;text-align:center;top:535.60px;font-size:13px;line-height:13px;color:#616161;font-weight:normal;">15</div>
<div class="t" style="left:0px;width:34.6px;text-align:center;top:555.60px;font-size:13px;line-height:13px;color:#616161;font-weight:normal;">16</div>
<div class="t" style="left:0px;width:34.6px;text-align:center;top:575.60px;font-size:13px;line-height:13px;color:#616161;font-weight:normal;">17</div>
<div class="t" style="left:0px;width:34.6px;text-align:center;top:595.60px;font-size:13px;line-height:13px;color:#616161;font-weight:normal;">18</div>
<div class="t" style="left:0px;width:34.6px;text-align:center;top:615.60px;font-size:13px;line-height:13px;color:#616161;font-weight:normal;">19</div>
<div class="t" style="left:0px;width:34.6px;text-align:center;top:635.60px;font-size:13px;line-height:13px;color:#616161;font-weight:normal;">20</div>
<div class="t" style="left:0px;width:34.6px;text-align:center;top:655.60px;font-size:13px;line-height:13px;color:#616161;font-weight:normal;">21</div>
<div class="t" style="left:0px;width:34.6px;text-align:center;top:675.60px;font-size:13px;line-height:13px;color:#616161;font-weight:normal;">22</div>
<div class="t" style="left:0px;width:34.6px;text-align:center;top:695.60px;font-size:13px;line-height:13px;color:#616161;font-weight:normal;">23</div>
<div class="t" style="left:0px;width:34.6px;text-align:center;top:715.60px;font-size:13px;line-height:13px;color:#616161;font-weight:normal;">24</div>
<div class="t" style="left:0px;width:34.6px;text-align:center;top:735.60px;font-size:13px;line-height:13px;color:#616161;font-weight:normal;">25</div>
<div class="t" style="left:0px;width:34.6px;text-align:center;top:755.60px;font-size:13px;line-height:13px;color:#616161;font-weight:normal;">26</div>
<div class="t" style="left:0px;width:34.6px;text-align:center;top:775.60px;font-size:13px;line-height:13px;color:#616161;font-weight:normal;">27</div>
<div class="t" style="left:0px;width:34.6px;text-align:center;top:795.60px;font-size:13px;line-height:13px;color:#616161;font-weight:normal;">28</div>
<div class="t" style="left:0px;width:34.6px;text-align:center;top:815.60px;font-size:13px;line-height:13px;color:#616161;font-weight:normal;">29</div>
<div class="t" style="left:0px;width:34.6px;text-align:center;top:835.60px;font-size:13px;line-height:13px;color:#616161;font-weight:normal;">30</div>
<div class="t" style="left:0px;width:34.6px;text-align:center;top:855.60px;font-size:13px;line-height:13px;color:#616161;font-weight:normal;">31</div>
<div class="t" style="left:0px;width:34.6px;text-align:center;top:875.60px;font-size:13px;line-height:13px;color:#616161;font-weight:normal;">32</div>
<div class="a" style="left:0px;top:251px;width:37px;height:1px;background:#dcdcdc;"></div>
<div class="a" style="left:37px;top:251px;width:1227px;height:1px;background:#c4c4c4;"></div>
<div class="a" style="left:36px;top:233px;width:1px;height:656px;background:#d4d4d4;"></div>
<svg class="a" style="left:19px;top:234px" width="16" height="16" viewBox="0 0 16 16"><path d="M15 0.5V15H1Z" fill="#b9b9b9"/></svg>
<div class="a" style="left:37px;top:252px;width:231px;height:20px;background:#548235;"></div>
<div class="t" style="left:37px;width:231px;text-align:center;top:256.84px;font-size:12px;line-height:12px;color:#e4f0dc;font-weight:normal;">BUSCARX</div>
<div class="a" style="left:294px;top:252px;width:238px;height:20px;background:#548235;"></div>
<div class="t" style="left:294px;width:238px;text-align:center;top:256.84px;font-size:12px;line-height:12px;color:#e4f0dc;font-weight:normal;">CONTARA</div>
<div class="a" style="left:37px;top:332px;width:231px;height:20px;background:#548235;"></div>
<div class="t" style="left:37px;width:231px;text-align:center;top:336.84px;font-size:12px;line-height:12px;color:#e4f0dc;font-weight:normal;">COINCIDIR</div>
<div class="a" style="left:294px;top:332px;width:238px;height:20px;background:#548235;"></div>
<div class="t" style="left:294px;width:238px;text-align:center;top:336.84px;font-size:12px;line-height:12px;color:#e4f0dc;font-weight:normal;">CONTAR.SI</div>
<div class="a" style="left:37px;top:412px;width:231px;height:20px;background:#548235;"></div>
<div class="t" style="left:37px;width:231px;text-align:center;top:416.84px;font-size:12px;line-height:12px;color:#e4f0dc;font-weight:normal;">ÍNDICE</div>
<div class="a" style="left:294px;top:412px;width:238px;height:20px;background:#548235;"></div>
<div class="t" style="left:294px;width:238px;text-align:center;top:416.84px;font-size:12px;line-height:12px;color:#e4f0dc;font-weight:normal;">PROMEDIO.SI</div>
<div class="a" style="left:373px;top:451px;width:79px;height:21px;background:#ebf2fb;"></div>
<div class="a" style="left:113px;top:271px;width:1px;height:41px;background:#000;"></div>
<div class="a" style="left:190px;top:271px;width:1px;height:41px;background:#000;"></div>
<div class="a" style="left:267px;top:271px;width:1px;height:41px;background:#000;"></div>
<div class="a" style="left:37px;top:271px;width:231px;height:1px;background:#000;"></div>
<div class="a" style="left:37px;top:291px;width:231px;height:1px;background:#000;"></div>
<div class="a" style="left:37px;top:311px;width:231px;height:1px;background:#000;"></div>
<div class="a" style="left:294px;top:271px;width:1px;height:41px;background:#000;"></div>
<div class="a" style="left:373px;top:271px;width:1px;height:41px;background:#000;"></div>
<div class="a" style="left:452px;top:271px;width:1px;height:41px;background:#000;"></div>
<div class="a" style="left:531px;top:271px;width:1px;height:41px;background:#000;"></div>
<div class="a" style="left:294px;top:271px;width:238px;height:1px;background:#000;"></div>
<div class="a" style="left:294px;top:291px;width:238px;height:1px;background:#000;"></div>
<div class="a" style="left:294px;top:311px;width:238px;height:1px;background:#000;"></div>
<div class="a" style="left:113px;top:351px;width:1px;height:41px;background:#000;"></div>
<div class="a" style="left:190px;top:351px;width:1px;height:41px;background:#000;"></div>
<div class="a" style="left:267px;top:351px;width:1px;height:41px;background:#000;"></div>
<div class="a" style="left:37px;top:351px;width:231px;height:1px;background:#000;"></div>
<div class="a" style="left:37px;top:371px;width:231px;height:1px;background:#000;"></div>
<div class="a" style="left:37px;top:391px;width:231px;height:1px;background:#000;"></div>
<div class="a" style="left:294px;top:351px;width:1px;height:41px;background:#000;"></div>
<div class="a" style="left:373px;top:351px;width:1px;height:41px;background:#000;"></div>
<div class="a" style="left:452px;top:351px;width:1px;height:41px;background:#000;"></div>
<div class="a" style="left:531px;top:351px;width:1px;height:41px;background:#000;"></div>
<div class="a" style="left:294px;top:351px;width:238px;height:1px;background:#000;"></div>
<div class="a" style="left:294px;top:371px;width:238px;height:1px;background:#000;"></div>
<div class="a" style="left:294px;top:391px;width:238px;height:1px;background:#000;"></div>
<div class="a" style="left:113px;top:431px;width:1px;height:41px;background:#000;"></div>
<div class="a" style="left:190px;top:431px;width:1px;height:41px;background:#000;"></div>
<div class="a" style="left:267px;top:431px;width:1px;height:41px;background:#000;"></div>
<div class="a" style="left:37px;top:431px;width:231px;height:1px;background:#000;"></div>
<div class="a" style="left:37px;top:451px;width:231px;height:1px;background:#000;"></div>
<div class="a" style="left:37px;top:471px;width:231px;height:1px;background:#000;"></div>
<div class="a" style="left:294px;top:431px;width:1px;height:41px;background:#000;"></div>
<div class="a" style="left:373px;top:431px;width:1px;height:41px;background:#000;"></div>
<div class="a" style="left:452px;top:431px;width:1px;height:41px;background:#000;"></div>
<div class="a" style="left:531px;top:431px;width:1px;height:41px;background:#000;"></div>
<div class="a" style="left:294px;top:431px;width:238px;height:1px;background:#000;"></div>
<div class="a" style="left:294px;top:451px;width:238px;height:1px;background:#000;"></div>
<div class="a" style="left:294px;top:471px;width:238px;height:1px;background:#000;"></div>
<div class="t" style="left:39.8px;top:275.66px;font-size:13.4px;line-height:13.4px;color:#000;font-weight:normal;">Edad</div>
<div class="t" style="left:115.8px;top:275.66px;font-size:13.4px;line-height:13.4px;color:#000;font-weight:normal;">Juan</div>
<div class="t" style="right:1015.8px;top:275.66px;font-size:13.4px;line-height:13.4px;color:#000;font-weight:normal;">44</div>
<div class="t" style="left:296.8px;top:275.66px;font-size:13.4px;line-height:13.4px;color:#000;font-weight:normal;">Numero</div>
<div class="t" style="left:375.8px;top:275.66px;font-size:13.4px;line-height:13.4px;color:#000;font-weight:normal;">empleados</div>
<div class="t" style="right:751.8px;top:275.66px;font-size:13.4px;line-height:13.4px;color:#000;font-weight:normal;">8</div>
<div class="t" style="left:39.8px;top:295.66px;font-size:13.4px;line-height:13.4px;color:#000;font-weight:normal;">Edad</div>
<div class="t" style="left:115.8px;top:295.66px;font-size:13.4px;line-height:13.4px;color:#000;font-weight:normal;">Lupe</div>
<div class="t" style="right:1015.8px;top:295.66px;font-size:13.4px;line-height:13.4px;color:#000;font-weight:normal;">44</div>
<div class="t" style="left:296.8px;top:295.66px;font-size:13.4px;line-height:13.4px;color:#000;font-weight:normal;">Empleado</div>
<div class="t" style="left:375.8px;top:295.66px;font-size:13.4px;line-height:13.4px;color:#000;font-weight:normal;">Roberto</div>
<div class="t" style="right:751.8px;top:295.66px;font-size:13.4px;line-height:13.4px;color:#000;font-weight:normal;">9</div>
<div class="t" style="left:39.8px;top:355.66px;font-size:13.4px;line-height:13.4px;color:#000;font-weight:normal;">Posicion</div>
<div class="t" style="left:115.8px;top:355.66px;font-size:13.4px;line-height:13.4px;color:#000;font-weight:normal;">Mateo</div>
<div class="t" style="right:1015.8px;top:355.66px;font-size:13.4px;line-height:13.4px;color:#000;font-weight:normal;">3</div>
<div class="t" style="left:296.8px;top:355.66px;font-size:13.4px;line-height:13.4px;color:#000;font-weight:normal;">EDAD</div>
<div class="t" style="left:375.8px;top:355.66px;font-size:13.4px;line-height:13.4px;color:#000;font-weight:normal;">50-</div>
<div class="t" style="right:751.8px;top:355.66px;font-size:13.4px;line-height:13.4px;color:#000;font-weight:normal;">5</div>
<div class="t" style="left:39.8px;top:375.66px;font-size:13.4px;line-height:13.4px;color:#000;font-weight:normal;">Posicion</div>
<div class="t" style="left:115.8px;top:375.66px;font-size:13.4px;line-height:13.4px;color:#000;font-weight:normal;">Mateo</div>
<div class="t" style="right:1015.8px;top:375.66px;font-size:13.4px;line-height:13.4px;color:#000;font-weight:normal;">2</div>
<div class="t" style="left:296.8px;top:375.66px;font-size:13.4px;line-height:13.4px;color:#000;font-weight:normal;">Texto</div>
<div class="t" style="left:375.8px;top:375.66px;font-size:13.4px;line-height:13.4px;color:#000;font-weight:normal;">*</div>
<div class="t" style="right:751.8px;top:375.66px;font-size:13.4px;line-height:13.4px;color:#000;font-weight:normal;">24</div>
<div class="t" style="left:39.8px;top:435.66px;font-size:13.4px;line-height:13.4px;color:#000;font-weight:normal;">Division</div>
<div class="t" style="right:1092.8px;top:435.66px;font-size:13.4px;line-height:13.4px;color:#000;font-weight:normal;">4</div>
<div class="t" style="left:192.8px;top:435.66px;font-size:13.4px;line-height:13.4px;color:#000;font-weight:normal;">marketing</div>
<div class="t" style="left:296.8px;top:435.66px;font-size:13.4px;line-height:13.4px;color:#000;font-weight:normal;">Sueldo</div>
<div class="t" style="left:375.8px;top:435.66px;font-size:13.4px;line-height:13.4px;color:#000;font-weight:normal;">marketing</div>
<div class="t" style="right:751.8px;top:435.66px;font-size:13.4px;line-height:13.4px;color:#000;font-weight:normal;">57617.5</div>
<div class="t" style="right:1169.8px;top:455.66px;font-size:13.4px;line-height:13.4px;color:#000;font-weight:normal;">7</div>
<div class="t" style="right:1092.8px;top:455.66px;font-size:13.4px;line-height:13.4px;color:#000;font-weight:normal;">2</div>
<div class="t" style="left:192.8px;top:455.66px;font-size:13.4px;line-height:13.4px;color:#000;font-weight:normal;">ventas</div>
<div class="t" style="left:296.8px;top:455.66px;font-size:13.4px;line-height:13.4px;color:#000;font-weight:normal;">Sueldo</div>
<div class="t" style="left:375.8px;top:455.66px;font-size:13.4px;line-height:13.4px;color:#000;font-weight:normal;">&gt;50</div>
<div class="a" style="left:372.5px;top:450.5px;width:79px;height:22px;border-style:solid;border-color:#5b8fd9;border-width:2px 1.5px"></div>
<div class="a" style="left:371px;top:449px;width:4px;height:4px;background:#5b8fd9;"></div>
<div class="a" style="left:449px;top:449px;width:4px;height:4px;background:#5b8fd9;"></div>
<div class="a" style="left:371px;top:469px;width:4px;height:4px;background:#5b8fd9;"></div>
<div class="a" style="left:449px;top:469px;width:4px;height:4px;background:#5b8fd9;"></div>
<div class="a" style="left:451.5px;top:450px;width:401.5px;height:23px;background:#fff;border:2px solid #1f6e43"></div>
<div class="t" style="left:455px;top:456.85px;font-size:12.94px;line-height:12.94px;color:#000;font-weight:normal;">=PROMEDIO.SI('Tabla de Datos'!A2:A9,<span style="color:#4a86d6">F11</span>,'Tabla de Datos'!E2:E9)</div>
<div class="a" style="left:846px;top:453px;width:1px;height:17px;background:#000;"></div>
<svg class="a" style="left:465px;top:446px" width="9" height="22" viewBox="0 0 9 22"><path d="M1.5 2H3.5M5.5 2H7.5M4.5 2.5V17.5M1.5 18H3.5M5.5 18H7.5" stroke="#fff" stroke-width="2.2"/><path d="M1.5 2H3.5M5.5 2H7.5M4.5 2.5V17.5M1.5 18H3.5M5.5 18H7.5" stroke="#111" stroke-width="1"/></svg>
<div class="a" style="left:452px;top:233px;width:80px;height:18px;background:#dcdad8;"></div>
<div class="a" style="left:452px;top:249px;width:80px;height:2px;background:#1f6e43;"></div>
<div class="t" style="left:452px;width:80px;text-align:center;top:234.64px;font-size:12px;line-height:12px;color:#1f6e43;font-weight:bold;">G</div>
<div class="a" style="left:0px;top:451px;width:36px;height:21px;background:#dcdad8;"></div>
<div class="a" style="left:35px;top:451px;width:2px;height:21px;background:#1f6e43;"></div>
<div class="t" style="left:0px;width:36px;text-align:center;top:456.00px;font-size:13px;line-height:13px;color:#1f6e43;font-weight:bold;">11</div>
<div class="a" style="left:1264px;top:233px;width:16px;height:656px;background:#f5f5f5;"></div>
<div class="a" style="left:1264px;top:251px;width:14px;height:638px;background:#f0f0f0;"></div>
<svg class="a" style="left:1267px;top:259px" width="9" height="6" viewBox="0 0 9 6"><path d="M0.5 5L4.25 1L8 5Z" fill="#a0a0a0"/></svg>
<div class="a" style="left:1266px;top:267px;width:11px;height:345px;background:#c2c2c2;"></div>
<svg class="a" style="left:1267px;top:878px" width="9" height="6" viewBox="0 0 9 6"><path d="M0.5 1L4.25 5L8 1Z" fill="#505050"/></svg>
<div class="a" style="left:0px;top:889px;width:1264px;height:15px;background:#f5f5f5;"></div>
<div class="a" style="left:37px;top:889px;width:1227px;height:15px;background:#f0f0f0;"></div>
<svg class="a" style="left:41px;top:892px" width="6" height="9" viewBox="0 0 6 9"><path d="M5 0.5L1 4.5L5 8.5Z" fill="#a0a0a0"/></svg>
<div class="a" style="left:52px;top:891px;width:255px;height:11px;background:#c2c2c2;"></div>
<svg class="a" style="left:1254px;top:892px" width="6" height="9" viewBox="0 0 6 9"><path d="M1 0.5L5 4.5L1 8.5Z" fill="#404040"/></svg>
<div class="a" style="left:1264px;top:889px;width:14px;height:15px;background:#dadada;"></div>
<div class="a" style="left:0px;top:904px;width:1278px;height:32px;background:#f3f3f3;"></div>
<svg class="a" style="left:12px;top:914px" width="8" height="12" viewBox="0 0 8 12"><path d="M6 1L1.3 5.5L6 10" fill="none" stroke="#b0b0b0" stroke-width="1"/></svg>
<svg class="a" style="left:45.5px;top:914px" width="8" height="12" viewBox="0 0 8 12"><path d="M1.3 1L6 5.5L1.3 10" fill="none" stroke="#b0b0b0" stroke-width="1"/></svg>
<svg class="a" style="left:73px;top:912px" width="14" height="14" viewBox="0 0 14 14"><path d="M1 3.5H13M1 7.5H13M1 11.5H13" stroke="#252423" stroke-width="1.2"/></svg>
<div class="t" style="left:105.5px;top:911.81px;font-size:13.93px;line-height:13.93px;color:#444;font-weight:normal;">Tabla de Datos</div>
<div class="t" style="left:216.5px;top:911.28px;font-size:14.2px;line-height:14.2px;color:#252423;font-weight:normal;letter-spacing:-0.45px;-webkit-text-stroke:0.45px #252423;">Funciones</div>
<div class="a" style="left:216px;top:933px;width:62px;height:3px;background:#1f6e43;"></div>
<svg class="a" style="left:296px;top:912px" width="14" height="14" viewBox="0 0 14 14"><path d="M7 1V13M1 7H13" stroke="#c0c0c0" stroke-width="1.1"/></svg>
<div class="a" style="left:0px;top:936px;width:1280px;height:24px;background:#fff;"></div>
<div class="a" style="left:0px;top:936px;width:1280px;height:1px;background:#e6e6e6;"></div>
<div class="t" style="left:14.6px;top:943.01px;font-size:11.21px;line-height:11.21px;color:#444;font-weight:normal;">Modo de cálculo: Automático</div>
<div class="t" style="left:175.8px;top:943.26px;font-size:10.91px;line-height:10.91px;color:#444;font-weight:normal;">Estadísticas del libro de trabajo</div>
<svg class="a" style="left:926px;top:946px" width="8" height="6" viewBox="0 0 8 6"><path d="M1 1L3.5 4L6 1" fill="none" stroke="#444" stroke-width="1.1"/></svg>
<div class="t" style="left:972.7px;top:943.08px;font-size:11.13px;line-height:11.13px;color:#444;font-weight:normal;">Proporcionar comentarios a Microsoft</div>
<div class="a" style="left:1197px;top:947px;width:11px;height:1.3px;background:#444;"></div>
<div class="t" style="left:1217.7px;top:943.51px;font-size:10.62px;line-height:10.62px;color:#444;font-weight:normal;">100%</div>
<svg class="a" style="left:1250px;top:942px" width="13" height="13" viewBox="0 0 13 13"><path d="M6.5 1V12M1 6.5H12" stroke="#444" stroke-width="1.2"/></svg>
<div class="a" style="left:0px;top:958px;width:1280px;height:2px;background:#111;"></div>
<div class="a" style="left:1278px;top:72px;width:2px;height:888px;background:#111;"></div>
</body></html>
